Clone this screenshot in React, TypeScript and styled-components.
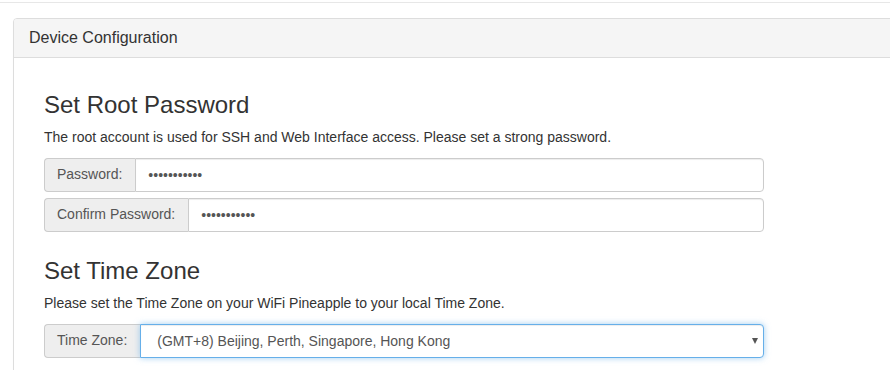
import React from "react";
import styled, { createGlobalStyle } from "styled-components";

const Global = createGlobalStyle`
  html, body { margin: 0; padding: 0; overflow: hidden; background: #fff; }
  body {
    font-family: "Liberation Sans", Arial, sans-serif;
    font-size: 14px;
    line-height: 1.42857;
    color: #333;
  }
  * { box-sizing: border-box; }
`;

const Page = styled.div`
  width: 1000px;
`;

const TopBar = styled.div`
  height: 3px;
  border-bottom: 1px solid #e7e7e7;
  width: 890px;
`;

const Panel = styled.div`
  margin: 15px 0 0 13px;
  width: 960px;
  border: 1px solid #ddd;
  border-radius: 4px;
  background: #fff;
  box-shadow: 0 1px 1px rgba(0, 0, 0, 0.05);
`;

const PanelHeading = styled.div`
  background: #f5f5f5;
  border-bottom: 1px solid #ddd;
  border-radius: 3px 3px 0 0;
  padding: 10px 15px;
  font-size: 16px;
  line-height: 1.1;
  color: #333;
`;

const PanelBody = styled.div`
  padding: 14px 15px 15px;
`;

const Content = styled.div`
  padding: 0 15px;
  width: 750px;
`;

const Section = styled.section`
  display: flow-root;
`;

const Heading = styled.h3`
  font-size: 24px;
  font-weight: 500;
  line-height: 1.1;
  margin: 20px 0 10px;
  color: #333;
`;

const Text = styled.p`
  margin: 0 0 10px;
`;

const InputGroup = styled.div`
  display: flex;
  width: 720px;
  height: 34px;
  margin-bottom: 6px;
`;

const Addon = styled.span`
  display: flex;
  align-items: center;
  padding: 6px 13px 6px 12px;
  font-size: 14px;
  color: #555;
  background: #eee;
  border: 1px solid #ccc;
  border-right: 0;
  border-radius: 4px 0 0 4px;
  white-space: nowrap;
`;

const Input = styled.input`
  flex: 1;
  min-width: 0;
  height: 34px;
  padding: 6px 12px;
  font-family: "Liberation Sans", Arial, sans-serif;
  font-size: 14px;
  color: #555;
  background: #fff;
  border: 1px solid #ccc;
  border-radius: 0 4px 4px 0;
  box-shadow: inset 0 1px 1px rgba(0, 0, 0, 0.075);
  outline: none;
`;

const SelectWrap = styled.div`
  position: relative;
  flex: 1;
  display: flex;
`;

const Select = styled.select<{ $focused?: boolean }>`
  flex: 1;
  appearance: none;
  -webkit-appearance: none;
  height: 34px;
  padding: 6px 24px 6px 16px;
  font-family: "Liberation Sans", Arial, sans-serif;
  font-size: 14px;
  color: #555;
  background: #fff;
  border: 1px solid ${(p) => (p.$focused ? "#66afe9" : "#ccc")};
  border-radius: 0 4px 4px 0;
  box-shadow: ${(p) =>
    p.$focused
      ? "inset 0 1px 1px rgba(0,0,0,.075), 0 0 6px rgba(102,175,233,.6)"
      : "inset 0 1px 1px rgba(0,0,0,.075)"};
  outline: none;
`;

const Caret = styled.span`
  position: absolute;
  right: 6px;
  top: 14px;
  width: 0;
  height: 0;
  border-left: 3.5px solid transparent;
  border-right: 3.5px solid transparent;
  border-top: 6px solid #555;
  pointer-events: none;
`;

export default function App() {
  return (
    <Page>
      <Global />
      <TopBar />
      <Panel>
        <PanelHeading>Device Configuration</PanelHeading>
        <PanelBody>
          <Content>
            <Section>
              <Heading>Set Root Password</Heading>
              <Text>
                The root account is used for SSH and Web Interface access. Please set a strong password.
              </Text>
              <InputGroup>
                <Addon>Password:</Addon>
                <Input type="password" defaultValue="aaaaaaaaaaa" />
              </InputGroup>
              <InputGroup>
                <Addon>Confirm Password:</Addon>
                <Input type="password" defaultValue="aaaaaaaaaaa" />
              </InputGroup>
            </Section>

            <Section>
              <Heading>Set Time Zone</Heading>
              <Text>Please set the Time Zone on your WiFi Pineapple to your local Time Zone.</Text>
              <InputGroup>
                <Addon>Time Zone:</Addon>
                <SelectWrap>
                  <Select $focused defaultValue="+8">
                    <option value="+8">(GMT+8) Beijing, Perth, Singapore, Hong Kong</option>
                  </Select>
                  <Caret />
                </SelectWrap>
              </InputGroup>
            </Section>
          </Content>
        </PanelBody>
      </Panel>
    </Page>
  );
}
